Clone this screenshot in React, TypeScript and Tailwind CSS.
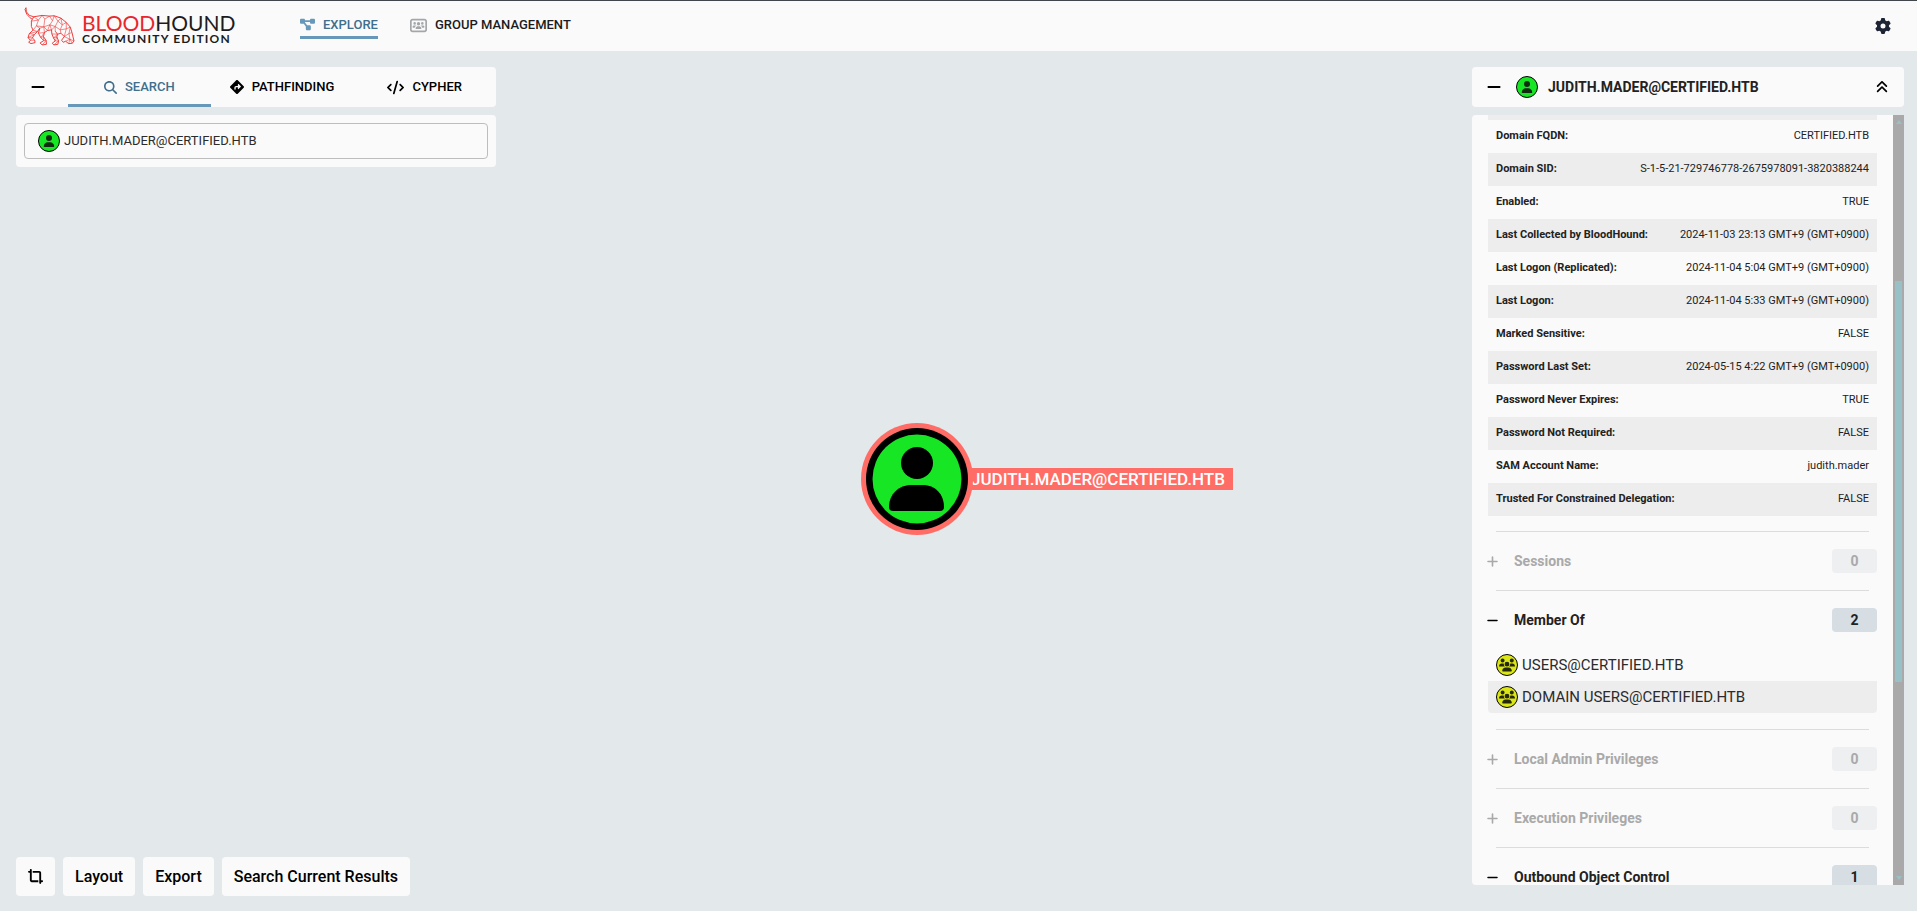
import type { ReactNode } from "react";
import {
  FaAnglesUp,
  FaCode,
  FaCropSimple,
  FaDiagramProject,
  FaDiamondTurnRight,
  FaGear,
  FaMagnifyingGlass,
  FaMinus,
  FaPlus,
  FaUser,
  FaUsers,
  FaUsersRectangle,
} from "react-icons/fa6";

const properties: [string, string][] = [
  ["Domain FQDN:", "CERTIFIED.HTB"],
  ["Domain SID:", "S-1-5-21-729746778-2675978091-3820388244"],
  ["Enabled:", "TRUE"],
  ["Last Collected by BloodHound:", "2024-11-03 23:13 GMT+9 (GMT+0900)"],
  ["Last Logon (Replicated):", "2024-11-04 5:04 GMT+9 (GMT+0900)"],
  ["Last Logon:", "2024-11-04 5:33 GMT+9 (GMT+0900)"],
  ["Marked Sensitive:", "FALSE"],
  ["Password Last Set:", "2024-05-15 4:22 GMT+9 (GMT+0900)"],
  ["Password Never Expires:", "TRUE"],
  ["Password Not Required:", "FALSE"],
  ["SAM Account Name:", "judith.mader"],
  ["Trusted For Constrained Delegation:", "FALSE"],
];

function Hound() {
  return (
    <svg viewBox="70 20 152 116" className="h-[39px] w-[51px]" fill="none" stroke="#ee3232" strokeLinejoin="round" aria-hidden="true">
      <g strokeWidth="2.8">
        <path d="M76 22L73 27L78 41L88 52L94 56M76 22L77 34L86 45L99 49" />
        <path d="M99 49L124 45L146 47L160 46L180 53L196 66L208 80L213 96L219 121L214 128L203 129L194 122L187 125L182 119L190 108L180 98L170 101L163 92" />
        <path d="M99 49L92 62L92 78L97 89L86 99L82 111L89 119L84 125L91 129L103 126L102 119L95 112L101 102L110 93L117 83" />
        <path d="M117 83L113 98L120 111L129 120L118 127L124 133L137 131L136 120L128 108L131 96L140 90L152 88L153 100L158 112L163 121L154 128L159 133L171 131L173 121L168 109L170 101" />
      </g>
      <path d="M99 49L113 59L124 45L132 56L146 47L155 61L160 46L171 62L180 53L184 73L196 66L196 85L208 80L204 99L213 96M92 62L113 59L107 76L97 89M107 76L129 79L132 56M129 79L147 73L155 61M147 73L163 78L171 62L184 73L178 88L163 78L163 92M178 88L196 85L190 108L204 99L207 116L219 121M107 76L117 83L129 79L131 96M129 79L140 90L147 73L152 88L163 78M178 88L180 98M190 108L207 116L203 129M194 122L207 116L214 128M97 89L110 93L86 99L101 102L82 111L95 112L89 119L102 119M113 98L131 96L120 111L128 108L129 120L136 120L124 133M153 100L170 101L158 112L168 109L163 121L173 121L159 133" strokeWidth="1.7" />
    </svg>
  );
}

function UserBadge() {
  return (
    <span className="flex size-[22px] shrink-0 items-center justify-center rounded-full border border-black bg-[#17e625]">
      <FaUser className="size-3 text-[#102a12]" />
    </span>
  );
}

function GroupBadge() {
  return (
    <span className="flex size-[22px] shrink-0 items-center justify-center rounded-full border border-black bg-[#dbe617]">
      <FaUsers className="size-4 text-[#26280a]" />
    </span>
  );
}

function Tab({ icon, label, active = false }: { icon: ReactNode; label: string; active?: boolean }) {
  return (
    <button
      type="button"
      role="tab"
      aria-selected={active}
      className={
        active
          ? "flex flex-1 items-center justify-center gap-2 border-b-3 border-[#6798b9] pt-[3px] text-[13px] font-medium text-[#406f8e]"
          : "flex flex-1 items-center justify-center gap-2 text-[13px] font-medium text-black"
      }
    >
      {icon}
      {label}
    </button>
  );
}

function Section({ label, count, open = false, children }: { label: string; count: number; open?: boolean; children?: ReactNode }) {
  return (
    <section className={count === 0 ? "text-[#a9a9a9]" : "text-[#222]"}>
      <hr className="mx-2 border-[#dcdcdc]" />
      <div className="flex items-center py-[17px]">
        <button type="button" aria-expanded={open} className="-ml-[2px] flex flex-1 items-center gap-[15px] text-sm font-bold">
          {open ? <FaMinus className="size-[13px] text-black" /> : <FaPlus className="size-[13px]" />}
          {label}
        </button>
        <span
          className={
            count === 0
              ? "flex h-6 w-[45px] items-center justify-center rounded-sm bg-[#edeff1] text-sm font-bold"
              : "flex h-6 w-[45px] items-center justify-center rounded-sm bg-[#d6dde3] text-sm font-bold"
          }
        >
          {count}
        </span>
      </div>
      {children}
    </section>
  );
}

function ToolButton({ children }: { children: ReactNode }) {
  return (
    <button type="button" className="flex h-[39px] items-center rounded-sm bg-[#fafafa] px-3 text-base font-medium text-black">
      {children}
    </button>
  );
}

function Header() {
  return (
    <header className="flex h-[51px] shrink-0 items-center border-t border-[#41464d] bg-[#fafafa] pr-[26px] pl-6">
      <a href="#" aria-label="BloodHound Community Edition" className="flex items-center gap-[7px]">
        <Hound />
        <span className="flex w-[156px] flex-col pt-[7px] font-[Lato,sans-serif] text-[#1c1c1c]">
          <span className="text-[21px] leading-[18px]">
            <span className="text-[#e8262b]">BLOOD</span>HOUND
          </span>
          <span className="text-xs leading-[14px] font-bold tracking-widest whitespace-nowrap">COMMUNITY EDITION</span>
        </span>
      </a>
      <nav className="ml-[62px] flex items-center gap-8 pb-1 text-[13px] font-medium">
        <a href="#explore" className="flex h-[30px] items-center gap-2 border-b-3 border-[#6798b9] pt-1 text-[#406f8e]">
          <FaDiagramProject className="size-[15px] text-[#6798b9]" />
          EXPLORE
        </a>
        <a href="#groups" className="flex h-[30px] items-center gap-2 pt-[2px] text-[#1c1c1c]">
          <FaUsersRectangle className="size-[17px] text-[#a3a7aa]" />
          GROUP MANAGEMENT
        </a>
      </nav>
      <button type="button" aria-label="Settings" className="ml-auto">
        <FaGear className="size-4 text-[#1d2433]" />
      </button>
    </header>
  );
}

function GraphNode() {
  return (
    <div className="absolute top-[372px] left-[861px] flex items-center">
      <svg viewBox="0 0 112 112" className="relative size-[112px]" aria-hidden="true">
        <circle cx="56" cy="56" r="56" fill="#ff6d66" />
        <circle cx="56" cy="56" r="51" fill="#000" />
        <circle cx="56" cy="56" r="44.5" fill="#17e625" />
        <circle cx="56" cy="40" r="16" fill="#000" />
        <path d="M50 62h12c12 0 21 9 21 22q0 4-4 4H32q-4 0-4-4c0-13 10-22 22-22z" fill="#000" />
      </svg>
      <span className="-ml-1 bg-[#ff6d66] pr-2 pl-[2px] text-[17px] leading-[22px] font-medium text-white">JUDITH.MADER@CERTIFIED.HTB</span>
    </div>
  );
}

function SearchPanel() {
  return (
    <section className="flex w-[480px] flex-col gap-2">
      <div className="flex h-10 rounded-sm bg-[#fafafa]">
        <button type="button" aria-label="Collapse" className="flex w-[52px] items-center pl-[14px]">
          <FaMinus className="size-4" />
        </button>
        <div role="tablist" className="flex flex-1">
          <Tab icon={<FaMagnifyingGlass className="size-[13px]" />} label="SEARCH" active />
          <Tab icon={<FaDiamondTurnRight className="size-[14px]" />} label="PATHFINDING" />
          <Tab icon={<FaCode className="size-[17px]" />} label="CYPHER" />
        </div>
      </div>
      <div className="rounded-sm bg-[#fafafa] p-2">
        <label className="flex h-9 items-center gap-1 rounded-[4px] border border-[#bdbdbd] px-[13px]">
          <UserBadge />
          <input aria-label="Search nodes" defaultValue="JUDITH.MADER@CERTIFIED.HTB" className="min-w-0 flex-1 bg-transparent text-[13px] text-[#2b2b2b] outline-none" />
        </label>
      </div>
    </section>
  );
}

function ScrollTrack() {
  return (
    <div className="flex w-[11px] shrink-0 flex-col items-center bg-[#a9a9a9] py-[5px]" aria-hidden="true">
      <svg viewBox="0 0 6 4" className="h-1 w-[6px]">
        <path d="M0 4L3 0L6 4z" fill="#98c1c7" />
      </svg>
      <div className="mt-[157px] mb-auto h-[401px] w-[7px] bg-[#98c1c7]" />
      <svg viewBox="0 0 6 4" className="h-1 w-[6px]">
        <path d="M0 0L3 4L6 0z" fill="#98c1c7" />
      </svg>
    </div>
  );
}

function EntityPanel() {
  return (
    <aside className="flex min-h-0 w-[432px] flex-col gap-2 pb-[11px]">
      <div className="flex h-10 shrink-0 items-center rounded-sm bg-[#fafafa] pr-[15px] pl-[14px]">
        <button type="button" aria-label="Collapse" className="mr-[14px]">
          <FaMinus className="size-4" />
        </button>
        <UserBadge />
        <h2 className="ml-[10px] flex-1 text-[14px] font-bold text-[#222]">JUDITH.MADER@CERTIFIED.HTB</h2>
        <button type="button" aria-label="Collapse all">
          <FaAnglesUp className="size-[14px]" />
        </button>
      </div>
      <div className="flex min-h-0 flex-1 overflow-hidden rounded-l-sm bg-[#fafafa]">
        <div className="min-w-0 flex-1 overflow-hidden px-4">
          <div className="h-[5px] bg-[#ededed]" />
          <table className="mb-[15px] block text-[11px] text-[#222]">
            <tbody className="block">
              {properties.map(([name, value]) => (
                <tr key={name} className="flex h-[33px] items-center justify-between px-2 even:bg-[#ededed]">
                  <th scope="row" className="text-left font-bold">{name}</th>
                  <td className="text-right">{value}</td>
                </tr>
              ))}
            </tbody>
          </table>
          <Section label="Sessions" count={0} />
          <Section label="Member Of" count={2} open>
            <ul className="mb-4 text-[15px] text-[#2b2b2b]">
              <li className="flex h-8 items-center gap-1 px-2"><GroupBadge />USERS@CERTIFIED.HTB</li>
              <li className="flex h-8 items-center gap-1 rounded-b-sm bg-[#ededed] px-2"><GroupBadge />DOMAIN USERS@CERTIFIED.HTB</li>
            </ul>
          </Section>
          <Section label="Local Admin Privileges" count={0} />
          <Section label="Execution Privileges" count={0} />
          <Section label="Outbound Object Control" count={1} open />
        </div>
        <ScrollTrack />
      </div>
    </aside>
  );
}

export default function App() {
  return (
    <div className="flex h-screen flex-col bg-[#e3e9eb] font-[Roboto,sans-serif]">
      <Header />
      <main className="relative flex min-h-0 flex-1 justify-between pt-4 pr-[13px] pb-[15px] pl-4">
        <GraphNode />
        <div className="flex flex-col justify-between">
          <SearchPanel />
          <div className="flex gap-2">
            <ToolButton>
              <FaCropSimple className="size-[15px]" aria-label="Reset view" />
            </ToolButton>
            <ToolButton>Layout</ToolButton>
            <ToolButton>Export</ToolButton>
            <ToolButton>Search Current Results</ToolButton>
          </div>
        </div>
        <EntityPanel />
      </main>
    </div>
  );
}
